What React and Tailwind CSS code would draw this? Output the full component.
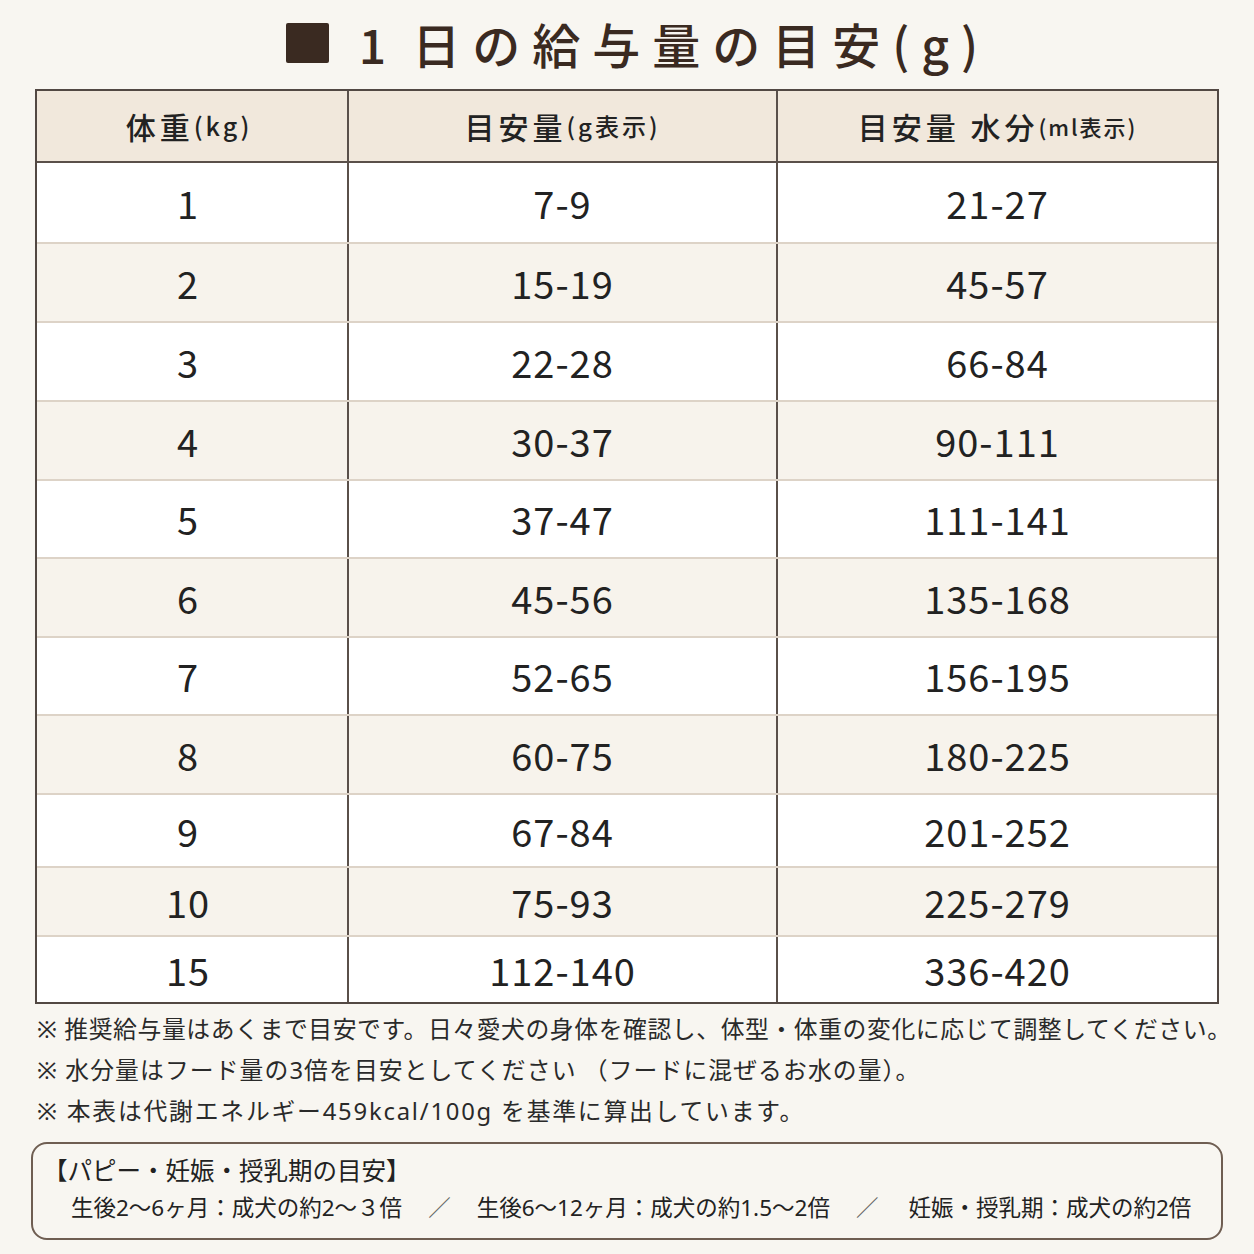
import React from "react";

const rows = [
  ["1", "7-9", "21-27", "h-[79px]"],
  ["2", "15-19", "45-57", "h-[79px]"],
  ["3", "22-28", "66-84", "h-[79px]"],
  ["4", "30-37", "90-111", "h-[79px]"],
  ["5", "37-47", "111-141", "h-[78px]"],
  ["6", "45-56", "135-168", "h-[79px]"],
  ["7", "52-65", "156-195", "h-[78px]"],
  ["8", "60-75", "180-225", "h-[79px]"],
  ["9", "67-84", "201-252", "h-[73px]"],
  ["10", "75-93", "225-279", "h-[69px]"],
  ["15", "112-140", "336-420", "h-[67px]"],
];

const jp = { fontFamily: '"Noto Sans CJK JP", "Noto Sans", sans-serif' };
const mix = { fontFamily: '"Noto Sans", "Noto Sans CJK JP", sans-serif' };

export default function App() {
  return (
    <div
      className="w-[1254px] h-[1254px] bg-[#f8f6f1] text-[#222] flex flex-col items-center"
      style={jp}
    >
      {/* Title */}
      <div className="shrink-0 flex items-center h-[89px] pb-[4px] pl-[22px] text-[#3a2a21]">
        <div className="w-[43px] h-[40px] bg-[#3a2a21] rounded-[2px] mr-[30px]" />
        <div className="text-[48px] font-medium leading-none flex items-center">
          <span className="mr-[26px]">1</span>
          <span className="tracking-[12px]">日の給与量の目安(g)</span>
        </div>
      </div>

      {/* Table */}
      <div className="shrink-0 w-[1184px] border-2 border-[#524843] bg-white">
        <div className="grid grid-cols-[310px_429px_441px] h-[72px] bg-[#f1e8dc] border-b-2 border-[#5a504a]">
          <div className="flex items-center justify-center text-[30px] font-medium tracking-[4px] pr-[6px]">
            体重<span className="text-[25px] tracking-[3px]">(kg)</span>
          </div>
          <div className="flex items-center justify-center text-[30px] font-medium tracking-[4px] border-l-2 border-[#5a504a]">
            目安量<span className="text-[24px] tracking-[3px]">(g表示)</span>
          </div>
          <div className="flex items-center justify-center text-[30px] font-medium tracking-[4px] border-l-2 border-[#5a504a]">
            目安量 水分<span className="text-[22px] tracking-[2px]">(ml表示)</span>
          </div>
        </div>
        {rows.map((r, i) => (
          <div
            key={r[0]}
            className={`grid grid-cols-[310px_429px_441px] ${r[3]} ${
              i % 2 === 1 ? "bg-[#f7f3ec]" : "bg-white"
            } ${i > 0 ? "border-t-2 border-[#ddd3c7]" : ""}`}
          >
            <div className="flex items-center justify-center text-[38px] leading-none tracking-[1px] pr-[8px]">
              {r[0]}
            </div>
            <div className="flex items-center justify-center text-[38px] leading-none tracking-[1px] border-l-2 border-[#5a504a]">
              {r[1]}
            </div>
            <div className="flex items-center justify-center text-[38px] leading-none tracking-[1px] border-l-2 border-[#5a504a]">
              {r[2]}
            </div>
          </div>
        ))}
      </div>

      {/* Notes */}
      <div
        className="shrink-0 w-[1184px] pt-[5px] flex flex-col text-[23.8px] leading-[41px] text-[#2a2a2a] pl-[2px] whitespace-nowrap"
        style={mix}
      >
        <div className="tracking-[0.6px]">※ 推奨給与量はあくまで目安です。日々愛犬の身体を確認し、体型・体重の変化に応じて調整してください。</div>
        <div className="tracking-[1.1px]">※ 水分量はフード量の3倍を目安としてください （フードに混ぜるお水の量）。</div>
        <div className="tracking-[1.8px]">※ 本表は代謝エネルギー459kcal/100g を基準に算出しています。</div>
      </div>

      {/* Box */}
      <div
        className="shrink-0 w-[1192px] mt-[10px] h-[98px] border-2 border-[#6f5e52] rounded-[16px] px-[10px] pt-[8px] text-[#222] whitespace-nowrap"
        style={mix}
      >
        <div className="text-[24.5px] leading-[38px]">【パピー・妊娠・授乳期の目安】</div>
        <div className="flex items-center text-[22.5px] leading-[36px] pl-[28px]">
          <span>生後2〜6ヶ月：成犬の約2〜３倍</span>
          <span className="mx-[26px] text-[#666]">／</span>
          <span>生後6〜12ヶ月：成犬の約1.5〜2倍</span>
          <span className="ml-[26px] mr-[30px] text-[#666]">／</span>
          <span>妊娠・授乳期：成犬の約2倍</span>
        </div>
      </div>
    </div>
  );
}
